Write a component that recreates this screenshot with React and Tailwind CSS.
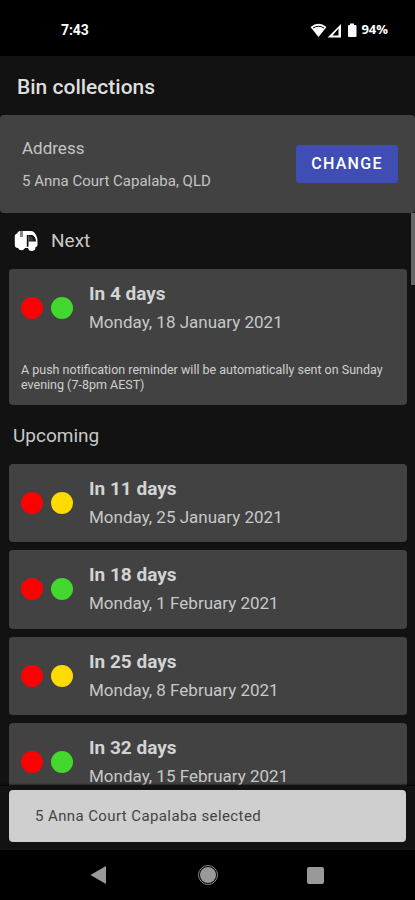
const upcoming = [
  { days: 'In 11 days', date: 'Monday, 25 January 2021', second: 'yellow' },
  { days: 'In 18 days', date: 'Monday, 1 February 2021', second: 'green' },
  { days: 'In 25 days', date: 'Monday, 8 February 2021', second: 'yellow' },
  { days: 'In 32 days', date: 'Monday, 15 February 2021', second: 'green' },
];

function Bins({ second }) {
  return (
    <div className="flex gap-2">
      <span className="size-[22px] rounded-full bg-[#ff0000]" />
      <span className={`size-[22px] rounded-full ${second === 'green' ? 'bg-[#43d82d]' : 'bg-[#ffdb00]'}`} />
    </div>
  );
}

function Collection({ days, date, second }) {
  return (
    <div className="flex h-[78.5px] items-center gap-4 pl-[12px]">
      <Bins second={second} />
      <div className="whitespace-nowrap">
        <div className="text-[19px] leading-[28px] font-bold text-[#d3d3d3]">{days}</div>
        <div className="text-[17px] leading-[28px] text-[#c8c8c8]">{date}</div>
      </div>
    </div>
  );
}

function Truck() {
  return (
    <svg className="h-[22px] w-6" viewBox="0 0 24 22">
      <path
        fill="#fff"
        d="M6 1H17Q20 1 22 5Q24 8 23.5 12V15Q23.5 17 21.5 17A3.8 3.8 0 0 1 14 18H11A3.8 3.8 0 0 1 4 18Q.8 18 .8 15V6Q.8 4 3 3.5L4 2Q5 1 6 1Z"
      />
      <path fill="#888" d="M6 1H9V7H6Z" />
      <path fill="#121212" d="M12.8 5H14.5V16.5L12.8 17Z" />
      <path fill="#121212" d="M14.5 5H18Q21.5 6 22 11.5H14.5Z" />
      <path fill="#fff" d="M14.5 6.5H17.5Q19 8 19.5 10.8H14.5Z" opacity=".18" />
    </svg>
  );
}

export default function App() {
  return (
    <div className="flex h-[900px] w-[415px] flex-col overflow-hidden bg-[#121212] font-[Roboto,sans-serif]">
      <div className="flex h-14 shrink-0 items-center justify-between bg-black pt-1 pr-[27px] pl-[61px] text-[14px] font-bold text-white">
        <span className="tracking-[-0.1px]">7:43</span>
        <div className="flex items-center">
          <svg className="h-[15px] w-[52px]" viewBox="0 0 52 15">
            <path fill="#fff" d="M.5 4Q8.500-2.500 16.500 4L8.500 14Z" />
            <path fill="none" stroke="#000" strokeWidth="1" d="M3 5Q8.500 1.500 14 5" />
            <path fill="#fff" fillRule="evenodd" d="M31 1V14.500H17.500ZM28.500 5.500L22.500 12.500H28.500Z" />
            <path fill="#fff" d="M40 .5H44V2H45.500Q46.500 2 46.500 3V13Q46.500 14 45.500 14H39Q38 14 38 13V3Q38 2 39 2H40Z" />
          </svg>
          <span className="ml-[-1px] font-['Open_Sans',sans-serif] text-[13px]">94%</span>
        </div>
      </div>
      <header className="flex h-[59px] shrink-0 items-center pt-1 pl-[17px]">
        <h1 className="text-[21px] font-medium text-[#dedede]">Bin collections</h1>
      </header>
      <section className="flex h-[98px] shrink-0 items-center justify-between rounded-[4px] bg-[#424242] pr-[17px] pl-[22px]">
        <div className="flex flex-col gap-[12px] whitespace-nowrap">
          <div className="text-[17px] leading-[22px] text-[#c4c4c4]">Address</div>
          <div className="text-[15px] leading-[20px] text-[#c4c4c4]">5 Anna Court Capalaba, QLD</div>
        </div>
        <button className="h-[38px] w-[102px] rounded-[3px] bg-[#3f4db5] text-[16px] font-medium tracking-[1.3px] text-white">CHANGE</button>
      </section>
      <div className="flex h-[573px] shrink-0 justify-between overflow-hidden">
        <main className="ml-[9px] w-[398px]">
          <div className="flex h-14 items-center gap-[13px] pl-[5px]">
            <Truck />
            <h2 className="text-[19px] text-[#c8c8c8]">Next</h2>
          </div>
          <div className="h-[135.5px] rounded-[4px] bg-[#424242]">
            <Collection days="In 4 days" date="Monday, 18 January 2021" second="green" />
            <p className="mt-[14px] pl-[12px] text-[12.500px] leading-[15px] whitespace-nowrap text-[#d0d0d0]">
              A push notification reminder will be automatically sent on Sunday
              <br />
              evening (7-8pm AEST)
            </p>
          </div>
          <h2 className="flex h-[59px] items-center pt-1 pl-1 text-[19px] text-[#c8c8c8]">Upcoming</h2>
          <div className="flex flex-col gap-2">
            {upcoming.map((item) => (
              <div key={item.days} className="rounded-[4px] bg-[#424242]">
                <Collection {...item} />
              </div>
            ))}
          </div>
        </main>
        <div className="h-[72px] w-1 bg-[#666]" />
      </div>
      <div className="flex h-16 shrink-0 flex-col bg-[#121212] px-[9px] pt-[4px] shadow-[0_-1px_2px_#000]">
        <div className="flex h-[52px] items-center rounded-[4px] bg-[#cfcfcf] pl-[26px] text-[15px] tracking-[0.4px] text-[#444]">
          5 Anna Court Capalaba selected
        </div>
      </div>
      <nav className="flex h-[50px] shrink-0 items-center bg-black">
        <svg className="ml-[90px] h-[18px] w-4" viewBox="0 0 16 18">
          <path fill="#999" d="M.5 9L16 0V18Z" />
        </svg>
        <span className="ml-[92px] flex size-5 items-center justify-center rounded-full border border-[#888]">
          <span className="size-4 rounded-full bg-[#999]" />
        </span>
        <span className="ml-[89px] size-[17px] rounded-[2px] bg-[#999]" />
      </nav>
    </div>
  );
}
